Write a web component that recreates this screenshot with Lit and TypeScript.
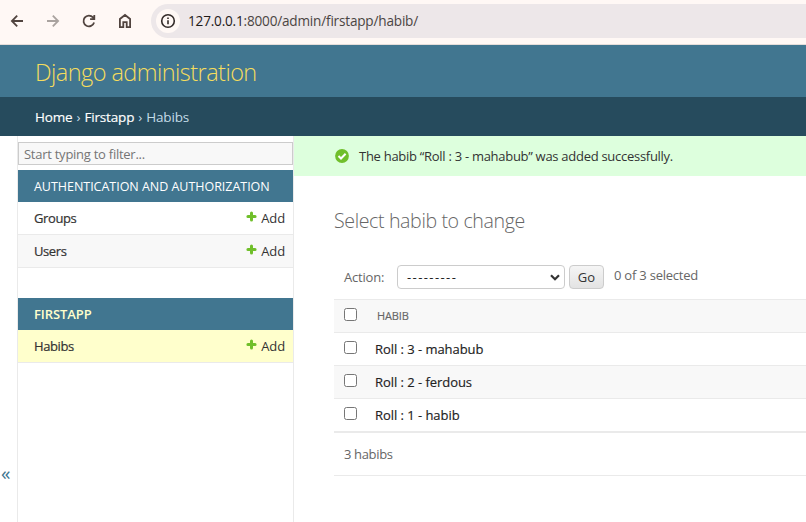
import { LitElement, html, css } from "lit";
import { customElement } from "lit/decorators.js";

const shared = css`
  :host, * { box-sizing: border-box; }
  :host { font-family: "Open Sans", "Noto Sans", sans-serif; font-size: 13px; color: #333; }
  span, b, h1, h2 { white-space: nowrap; }
`;

@customElement("browser-bar")
class BrowserBar extends LitElement {
  static styles = [shared, css`
    :host { display: flex; height: 45px; background: #fff8f5; border-bottom: 1px solid #e5ddda; align-items: flex-start; }
    .icons { display: flex; width: 151px; height: 42px; flex: none; padding-left: 7px; align-items: center; gap: 16px; }
    svg { display: block; width: 20px; height: 20px; flex: none; fill: none; stroke: #51443f; stroke-width: 1.8; }
    .off { stroke: #aaa39f; }
    .pill { flex: 1; height: 34px; margin-top: 4px; background: #ede7e9; border-radius: 17px 0 0 17px; display: flex; align-items: center; padding-left: 5px; }
    .info { width: 24px; height: 24px; border-radius: 50%; background: #fff8f5; display: grid; place-items: center; }
    .info svg { width: 16px; height: 16px; stroke: #332b29; stroke-width: 1.6; }
    .url { margin: -1px 0 0 8px; font-size: 13.6px; letter-spacing: -0.2px; color: #4b4543; }
    .host { color: #1f1b1a; }
  `];
  render() {
    return html`
      <div class="icons">
        <svg viewBox="0 0 20 20"><path d="M16 10H5M10.2 4.7 4.9 10l5.3 5.3" /></svg>
        <svg class="off" viewBox="0 0 20 20"><path d="M4 10h11M9.8 4.7l5.3 5.3-5.3 5.3" /></svg>
        <svg viewBox="0 0 20 20"><path d="M15.1 11.5A5.4 5.4 0 1 1 14 6.4l1.3 1.5M15.3 4v4.2h-4.2" /></svg>
        <svg viewBox="0 0 20 20"><path d="M4.9 16.2V8L10 4l5.1 4v8.2h-3.4v-5.1H8.3v5.1z" /></svg>
      </div>
      <div class="pill">
        <div class="info"><svg viewBox="0 0 16 16"><circle cx="8" cy="8" r="6.3" /><path d="M8 7.2v4M8 4.5v1.6" /></svg></div>
        <span class="url"><span class="host">127.0.0.1</span>:8000/admin/firstapp/habib/</span>
      </div>`;
  }
}

@customElement("admin-header")
class AdminHeader extends LitElement {
  static styles = [shared, css`
    :host { display: block; }
    .brand { height: 52px; background: #417690; padding: 0 35px; display: flex; align-items: center; }
    h1 { margin: 2px 0 0; font-size: 23.5px; font-weight: 300; color: #f5dd5d; letter-spacing: -0.55px; }
    .crumbs { height: 39px; background: #264b5d; color: #c4dce8; padding: 1px 35px 0; display: flex; align-items: center; gap: 4px; font-size: 13.5px; letter-spacing: -0.16px; }
    b { color: #fff; font-weight: 500; -webkit-text-stroke: 0.15px; }
  `];
  render() {
    return html`
      <div class="brand"><h1>Django administration</h1></div>
      <div class="crumbs"><b>Home</b><span>›</span><b>Firstapp</b><span>›</span><span>Habibs</span></div>`;
  }
}

@customElement("admin-sidebar")
class AdminSidebar extends LitElement {
  static styles = [shared, css`
    :host { display: flex; width: 294px; flex: none; border-right: 1px solid #eaeaea; }
    .toggle { width: 18px; flex: none; border-right: 1px solid #eaeaea; color: #417690; font-size: 19px; padding: 324px 0 0 1px; line-height: 26px; }
    nav { flex: 1; padding-top: 6px; }
    .filter { height: 23px; border: 1px solid #ccc; background: #f8f8f8; color: #757575; padding-left: 5px; display: flex; align-items: center; margin-bottom: 5px; letter-spacing: -0.26px; }
    .caption { height: 32px; background: #417690; color: #fff; display: flex; align-items: center; padding-left: 16px; letter-spacing: -0.07px; }
    .auth { font-size: 12.5px; letter-spacing: -0.03px; }
    .current .caption { color: #ffc; font-weight: 600; }
    .row { height: 33px; border-bottom: 1px solid #eaeaea; display: flex; align-items: center; padding: 0 8px 0 16px; }
    .row:nth-child(odd) { background: #f8f8f8; }
    .current .row { background: #ffc; }
    .row b { flex: 1; font-weight: 500; letter-spacing: -0.4px; -webkit-text-stroke: 0.2px; }
    .row svg { width: 11px; height: 11px; margin: -3px 4px 0 0; fill: none; stroke: #70bf2b; stroke-width: 3; stroke-linecap: round; }
    .row span { letter-spacing: -0.1px; }
    .module + .module { margin-top: 30px; }
  `];
  row(name: string) {
    return html`<div class="row"><b>${name}</b><svg viewBox="0 0 11 11"><path d="M5.5 1.9v7.2M1.9 5.5h7.2" /></svg><span>Add</span></div>`;
  }
  render() {
    return html`
      <div class="toggle">«</div>
      <nav>
        <div class="filter"><span>Start typing to filter...</span></div>
        <div class="module"><div class="caption auth"><span>AUTHENTICATION AND AUTHORIZATION</span></div>${["Groups", "Users"].map(n => this.row(n))}</div>
        <div class="module current"><div class="caption"><span>FIRSTAPP</span></div>${this.row("Habibs")}</div>
      </nav>`;
  }
}

@customElement("change-list")
class ChangeList extends LitElement {
  static styles = [shared, css`
    :host { display: block; flex: 1; min-width: 0; }
    .message { height: 40px; background: #dfd; display: flex; align-items: center; padding-left: 41px; letter-spacing: -0.28px; }
    .message svg { width: 14px; height: 14px; margin-right: 10px; }
    .body { padding-left: 40px; }
    h2 { margin: 30px 0 0; height: 30px; line-height: 30px; font-size: 19.6px; font-weight: 300; color: #666; letter-spacing: -0.38px; }
    .actions { height: 63px; padding: 29px 0 0 10px; display: flex; color: #666; }
    .label { width: 53px; line-height: 25px; letter-spacing: -0.2px; }
    .select { width: 168px; height: 24px; border: 1px solid #ccc; border-radius: 4px; display: flex; align-items: center; justify-content: space-between; padding: 0 4px 0 9px; color: #222; background: #fff; }
    .select span { letter-spacing: 1.4px; }
    .select svg { width: 10px; height: 7px; fill: none; stroke: #333; stroke-width: 2.2; }
    .go { margin-left: 4px; width: 35px; height: 24px; border: 1px solid #ccc; border-radius: 4px; background: linear-gradient(#f5f5f5, #e3e3e3); color: #333; text-align: center; line-height: 23px; }
    .count { margin-left: 10px; line-height: 21px; letter-spacing: -0.22px; }
    .row { height: 33px; border-top: 1px solid #eaeaea; display: flex; align-items: center; padding-left: 10px; }
    .row:nth-child(odd) { background: #f8f8f8; }
    .row b { margin-left: 18px; font-weight: 500; color: #222; letter-spacing: -0.05px; -webkit-text-stroke: 0.15px; }
    .row .heading { margin: -2px 0 0 20px; color: #666; font-size: 11px; letter-spacing: -0.1px; }
    .box { width: 13px; height: 13px; border: 1px solid #767676; border-radius: 2.5px; background: #fff; margin-top: -4px; }
    .footer { border-top: 2px solid #eaeaea; border-bottom: 1px solid #eaeaea; height: 45px; line-height: 43px; padding-left: 10px; color: #666; letter-spacing: -0.35px; }
  `];
  render() {
    return html`
      <div class="message">
        <svg viewBox="0 0 14 14"><circle cx="7" cy="7" r="6.9" fill="#70bf2b" /><path d="M3.5 7 6 9.5l4.6-4.7" fill="none" stroke="#fff" stroke-width="2" /></svg>
        <span>The habib “Roll : 3 - mahabub” was added successfully.</span>
      </div>
      <div class="body">
        <h2>Select habib to change</h2>
        <div class="actions">
          <span class="label">Action:</span>
          <div class="select"><span>---------</span><svg viewBox="0 0 10 7"><path d="M1 1.2 5 5.2l4-4" /></svg></div>
          <div class="go">Go</div>
          <span class="count">0 of 3 selected</span>
        </div>
        <div class="table">
          <div class="row"><i class="box"></i><b class="heading">HABIB</b></div>
          ${["Roll : 3 - mahabub", "Roll : 2 - ferdous", "Roll : 1 - habib"].map(n => html`<div class="row"><i class="box"></i><b>${n}</b></div>`)}
        </div>
        <div class="footer">3 habibs</div>
      </div>`;
  }
}

@customElement("app-root")
class AppRoot extends LitElement {
  static styles = css`
    :host { display: flex; flex-direction: column; height: 100vh; overflow: hidden; background: #fff; }
    main { display: flex; flex: 1; min-height: 0; }
  `;
  render() {
    return html`<browser-bar></browser-bar><admin-header></admin-header><main><admin-sidebar></admin-sidebar><change-list></change-list></main>`;
  }
}
